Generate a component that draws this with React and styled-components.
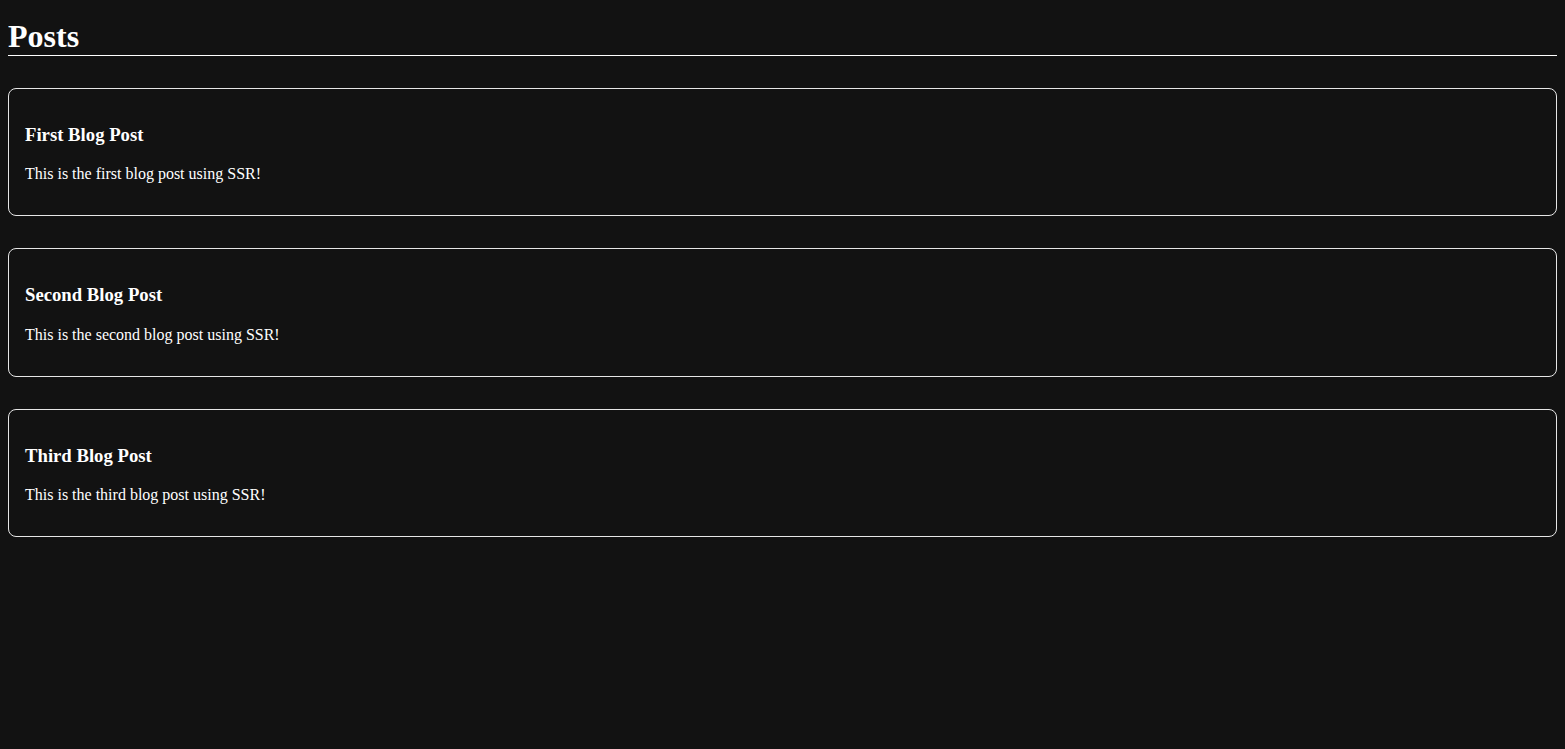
import React from 'react';
import styled, { createGlobalStyle } from 'styled-components';

const GlobalStyle = createGlobalStyle`
  body {
    margin: 8px;
    background: #121212;
    color: #ffffff;
    font-family: "Liberation Serif", "Times New Roman", serif;
  }
`;

const Title = styled.h1`
  font-size: 2em;
  margin: 10px 0 0;
  border-bottom: 1px solid #ffffff;
`;

const List = styled.section`
  display: flex;
  flex-direction: column;
  gap: 32px;
  padding-top: 32px;
`;

const Card = styled.article`
  border: 1px solid #e6e6e6;
  border-radius: 8px;
  padding: 16px;
`;

const PostTitle = styled.h3`
  font-size: 1.17em;
  line-height: 22px;
  margin: 1em 0;
`;

const PostBody = styled.p`
  font-size: 1em;
  line-height: 19px;
  margin: 1em 0;
`;

const posts = [
  { id: 1, title: 'First Blog Post', body: 'This is the first blog post using SSR!' },
  { id: 2, title: 'Second Blog Post', body: 'This is the second blog post using SSR!' },
  { id: 3, title: 'Third Blog Post', body: 'This is the third blog post using SSR!' },
];

export default function App() {
  return (
    <>
      <GlobalStyle />
      <Title>Posts</Title>
      <List>
        {posts.map((post) => (
          <Card key={post.id}>
            <PostTitle>{post.title}</PostTitle>
            <PostBody>{post.body}</PostBody>
          </Card>
        ))}
      </List>
    </>
  );
}
